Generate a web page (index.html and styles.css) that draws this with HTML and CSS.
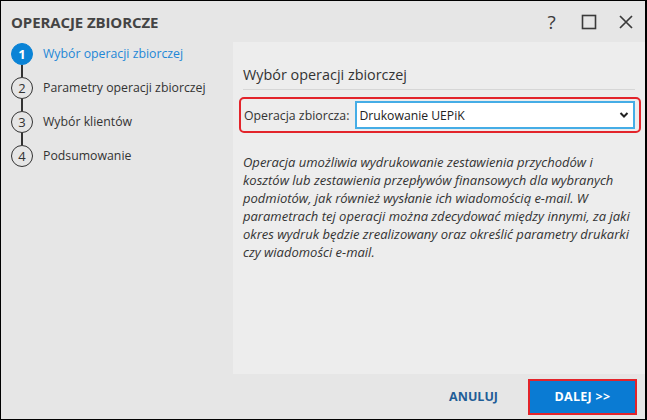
FILE: index.html
```html
<!DOCTYPE html>
<html lang="pl">
<head>
    <meta charset="UTF-8">
    <meta name="viewport" content="width=device-width, initial-scale=1.0">
    <title>Operacje zbiorcze</title>
    <link rel="stylesheet" href="styles.css">
</head>
<body>
    <div class="dialog">
        <div class="title-bar">
            <h1>OPERACJE ZBIORCZE</h1>
            <div class="window-btns">
                <span class="win-btn help">?</span>
                <span class="win-btn">
                    <svg width="16" height="16" viewBox="0 0 16 16"><rect x="1.5" y="1.5" width="13" height="13" fill="none" stroke="#3a3a3a" stroke-width="1.6"/></svg>
                </span>
                <span class="win-btn">
                    <svg width="16" height="16" viewBox="0 0 16 16"><path d="M2 2 L14 14 M14 2 L2 14" stroke="#3a3a3a" stroke-width="1.7" fill="none"/></svg>
                </span>
            </div>
        </div>

        <div class="dialog-body">
            <ol class="steps">
                <li class="step active"><span class="num">1</span>Wybór operacji zbiorczej</li>
                <li class="step"><span class="num">2</span>Parametry operacji zbiorczej</li>
                <li class="step"><span class="num">3</span>Wybór klientów</li>
                <li class="step last"><span class="num">4</span>Podsumowanie</li>
            </ol>

            <div class="panel">
                <h2>Wybór operacji zbiorczej</h2>
                <div class="field-row">
                    <label for="operation">Operacja zbiorcza:</label>
                    <div class="combo" id="operation">
                        <span>Drukowanie UEPiK</span>
                        <svg width="10" height="8" viewBox="0 0 10 8"><path d="M1.5 2 L5 5.5 L8.5 2" stroke="#222" stroke-width="2" fill="none"/></svg>
                    </div>
                </div>
                <p class="description">
                    Operacja umożliwia wydrukowanie zestawienia przychodów i<br>
                    kosztów lub zestawienia przepływów finansowych dla wybranych<br>
                    podmiotów, jak również wysłanie ich wiadomością e-mail. W<br>
                    parametrach tej operacji można zdecydować między innymi, za jaki<br>
                    okres wydruk będzie zrealizowany oraz określić parametry drukarki<br>
                    czy wiadomości e-mail.
                </p>
            </div>
        </div>

        <div class="footer">
            <button type="button" class="btn-flat">ANULUJ</button>
            <button type="button" class="btn-primary">DALEJ &gt;&gt;</button>
        </div>
    </div>
</body>
</html>
```

FILE: styles.css
```css
html, body {
    margin: 0;
    padding: 0;
}
body {
    font-family: "Open Sans", "Noto Sans", sans-serif;
    color: #333;
    background-color: #e6e6e6;
}
.dialog {
    width: 647px;
    height: 420px;
    box-sizing: border-box;
    border: 1px solid #000;
    border-right-width: 2px;
    background-color: #e6e6e6;
    display: flex;
    flex-direction: column;
}
.title-bar {
    height: 41px;
    display: flex;
    align-items: center;
    justify-content: space-between;
    padding-left: 10px;
}
h1 {
    margin: 0;
    font-size: 15px;
    font-weight: 700;
    color: #444;
    letter-spacing: -0.1px;
}
.window-btns {
    display: flex;
    align-items: center;
    margin-right: 1px;
}
.win-btn {
    width: 37px;
    display: flex;
    justify-content: center;
    color: #3a3a3a;
}
.help {
    font-size: 19px;
    line-height: 20px;
}
.dialog-body {
    flex: 1;
    display: flex;
}
.steps {
    list-style: none;
    margin: 0;
    padding: 1px 0 0 10px;
    width: 222px;
}
.step {
    position: relative;
    height: 34px;
    display: flex;
    align-items: flex-start;
    font-size: 12.3px;
    line-height: 22px;
    color: #333;
}
.step .num {
    width: 22px;
    height: 22px;
    box-sizing: border-box;
    border: 1.5px solid #333;
    border-radius: 50%;
    margin-right: 10px;
    display: flex;
    align-items: center;
    justify-content: center;
    font-size: 13px;
    line-height: 1;
    background-color: #e6e6e6;
}
.step::before {
    content: "";
    position: absolute;
    left: 10px;
    top: 22px;
    width: 2px;
    height: 12px;
    background-color: #333;
}
.step.last::before {
    display: none;
}
.step.active {
    color: #2386d6;
}
.step.active .num {
    background-color: #0a83d6;
    border-color: #0a83d6;
    color: #fff;
    font-weight: 700;
}
.panel {
    flex: 1;
    background-color: #ededed;
    padding: 23px 10px 0 10px;
}
h2 {
    margin: 0;
    font-size: 14.4px;
    font-weight: 400;
    color: #333;
    padding-bottom: 5px;
    border-bottom: 1px solid #d6d6d6;
}
.field-row {
    display: flex;
    align-items: center;
    margin: 7px -6px 0 -4px;
    padding: 2px 4px 2px 3px;
    border: 2px solid #e3242b;
    border-radius: 5px;
}
.field-row label {
    font-size: 12.3px;
    color: #333;
    margin-right: 6px;
}
.combo {
    flex: 1;
    height: 28px;
    box-sizing: border-box;
    border: 2px solid #45ade6;
    background-color: #fff;
    display: flex;
    align-items: center;
    justify-content: space-between;
    padding: 0 4px 0 2px;
    font-size: 12.2px;
    color: #222;
}
.description {
    margin: 20px 0 0 0;
    font-size: 13px;
    font-style: italic;
    line-height: 18px;
    color: #333;
}
.footer {
    height: 45px;
    display: flex;
    align-items: center;
    justify-content: flex-end;
    padding-right: 8px;
}
.footer button {
    font-family: inherit;
    font-size: 12.5px;
    font-weight: 700;
    cursor: pointer;
}
.btn-flat {
    background: none;
    border: none;
    color: #1f5d97;
    padding: 0;
    margin-right: 30px;
}
.btn-primary {
    width: 109px;
    height: 36px;
    background-color: #0a7bd3;
    color: #fff;
    border: 2px solid #e3242b;
    letter-spacing: 0.3px;
}
```
